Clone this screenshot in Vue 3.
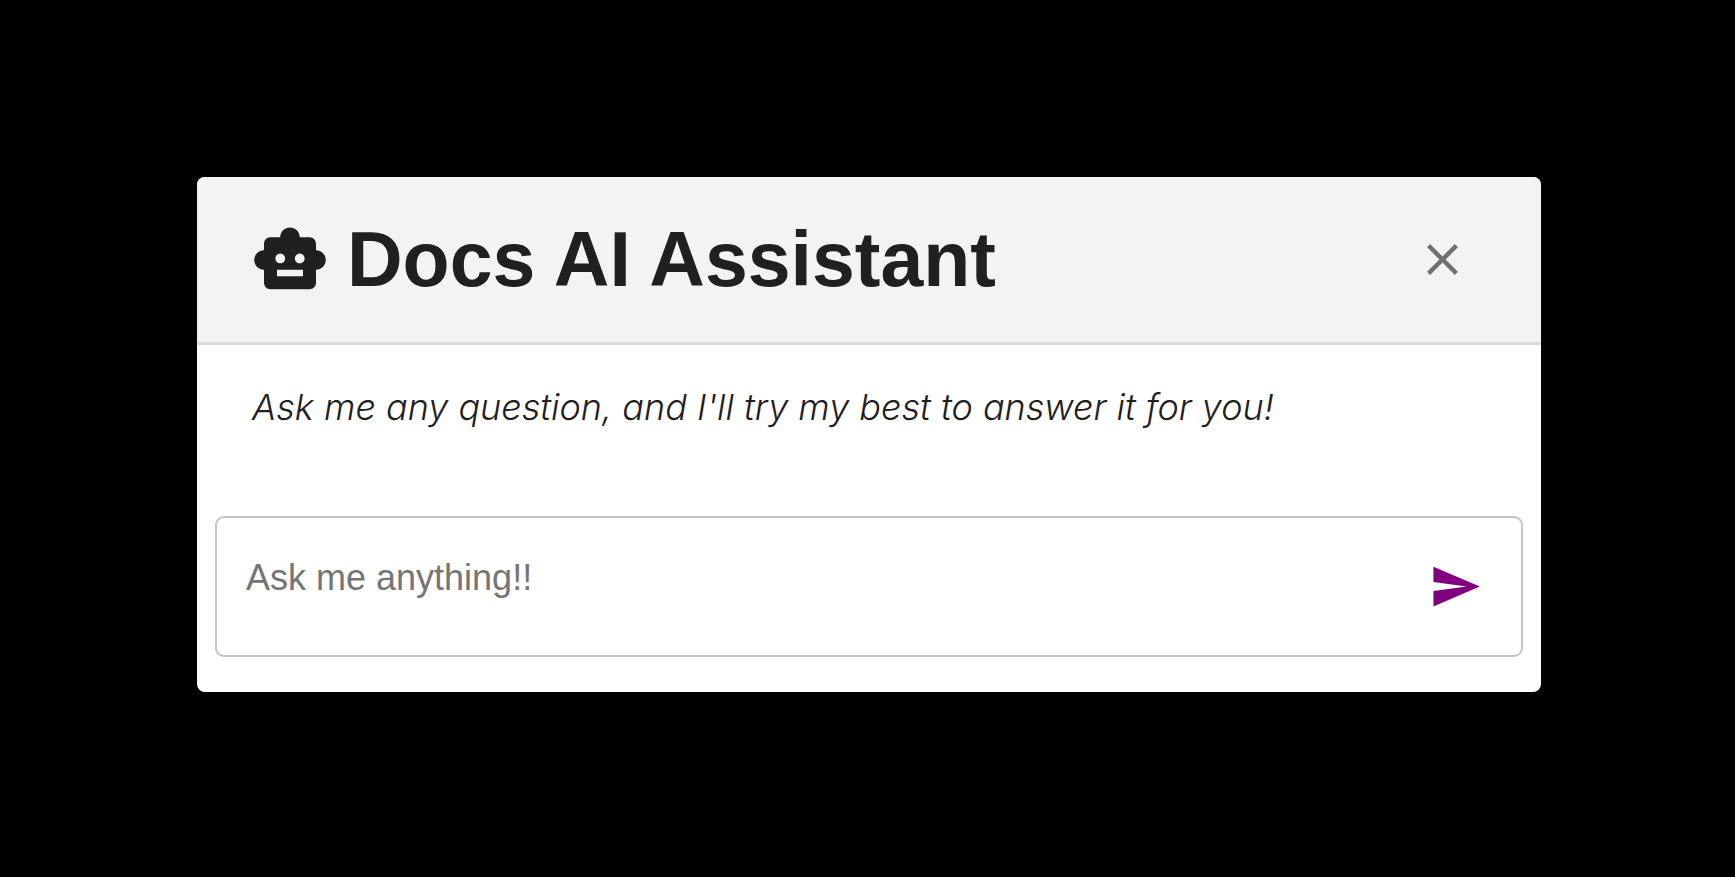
<script setup>
import { ref } from 'vue'

const open = ref(true)
const question = ref('')

function send() {
  question.value = ''
}
</script>

<template>
  <main class="backdrop">
    <section v-if="open" class="dialog" role="dialog" aria-labelledby="assistant-title">
      <header class="header">
        <svg class="robot" viewBox="0 0 24 24" aria-hidden="true">
          <path d="M20 9V7c0-1.1-.9-2-2-2h-3c0-1.66-1.34-3-3-3S9 3.34 9 5H6c-1.1 0-2 .9-2 2v2c-1.66 0-3 1.34-3 3s1.34 3 3 3v4c0 1.1.9 2 2 2h12c1.1 0 2-.9 2-2v-4c1.66 0 3-1.34 3-3s-1.34-3-3-3zM7.5 11.5c0-.83.67-1.5 1.5-1.5s1.5.67 1.5 1.5S9.83 13 9 13s-1.5-.67-1.5-1.5zM16 17H8v-2h8v2zm-1-4c-.83 0-1.5-.67-1.5-1.5S14.17 10 15 10s1.5.67 1.5 1.5S15.83 13 15 13z" />
        </svg>
        <h1 id="assistant-title" class="title">Docs AI Assistant</h1>
        <button class="icon-button close" type="button" aria-label="Close" @click="open = false">
          <svg class="icon" viewBox="0 0 24 24" aria-hidden="true">
            <path d="M19 6.41 17.59 5 12 10.59 6.41 5 5 6.41 10.59 12 5 17.59 6.41 19 12 13.41 17.59 19 19 17.59 13.41 12z" />
          </svg>
        </button>
      </header>
      <p class="intro">Ask me any question, and I'll try my best to answer it for you!</p>
      <form class="composer" @submit.prevent="send">
        <textarea v-model="question" class="question" rows="1" aria-label="Question" placeholder="Ask me anything!!"></textarea>
        <button class="icon-button send" type="submit" aria-label="Send">
          <svg class="icon" viewBox="0 0 24 24" aria-hidden="true">
            <path d="M2.01 21 23 12 2.01 3 2 10l15 2-15 2z" />
          </svg>
        </button>
      </form>
    </section>
  </main>
</template>

<style>
html,
body {
  background: #000;
}
</style>

<style scoped>
.backdrop {
  box-sizing: border-box;
  min-height: 100vh;
  padding: 177px 194px 177px 197px;
  background: #000;
}

.dialog {
  overflow: hidden;
  border-radius: 8px;
  background: #fff;
  color: #202020;
  font-family: "Liberation Sans", Arial, sans-serif;
}

.header {
  display: flex;
  align-items: center;
  padding: 32px 72px 32px 54px;
  border-bottom: 3px solid #d9dbdc;
  background: #f1f3f5;
}

.robot {
  flex: none;
  width: 78px;
  height: 78px;
  margin-right: 18px;
  fill: #202020;
}

.title {
  flex: 1;
  margin: 0;
  font-size: 77px;
  line-height: 101px;
  font-weight: 700;
}

.icon-button {
  display: flex;
  flex: none;
  padding: 0;
  border: 0;
  background: none;
  cursor: pointer;
}

.icon {
  width: 53px;
  height: 53px;
  fill: currentColor;
}

.close {
  color: #707070;
}

.intro {
  margin: 0;
  padding: 36px 55px 83px;
  font-family: Inter, sans-serif;
  font-size: 36px;
  font-weight: 340;
  line-height: 52px;
  font-style: italic;
}

.composer {
  display: flex;
  align-items: center;
  margin: 0 18px 35px;
  padding: 28px 39px 29px 29px;
  border: 2px solid #c4c4c4;
  border-radius: 9px;
}

.question {
  flex: 1;
  min-width: 0;
  height: 80px;
  box-sizing: border-box;
  padding: 11px 0;
  border: 0;
  outline: 0;
  resize: none;
  overflow: hidden;
  background: none;
  color: #202020;
  font: 36px/42px "Liberation Sans", Arial, sans-serif;
}

.question::placeholder {
  color: #757575;
  opacity: 1;
}

.send {
  color: #800080;
}
</style>
